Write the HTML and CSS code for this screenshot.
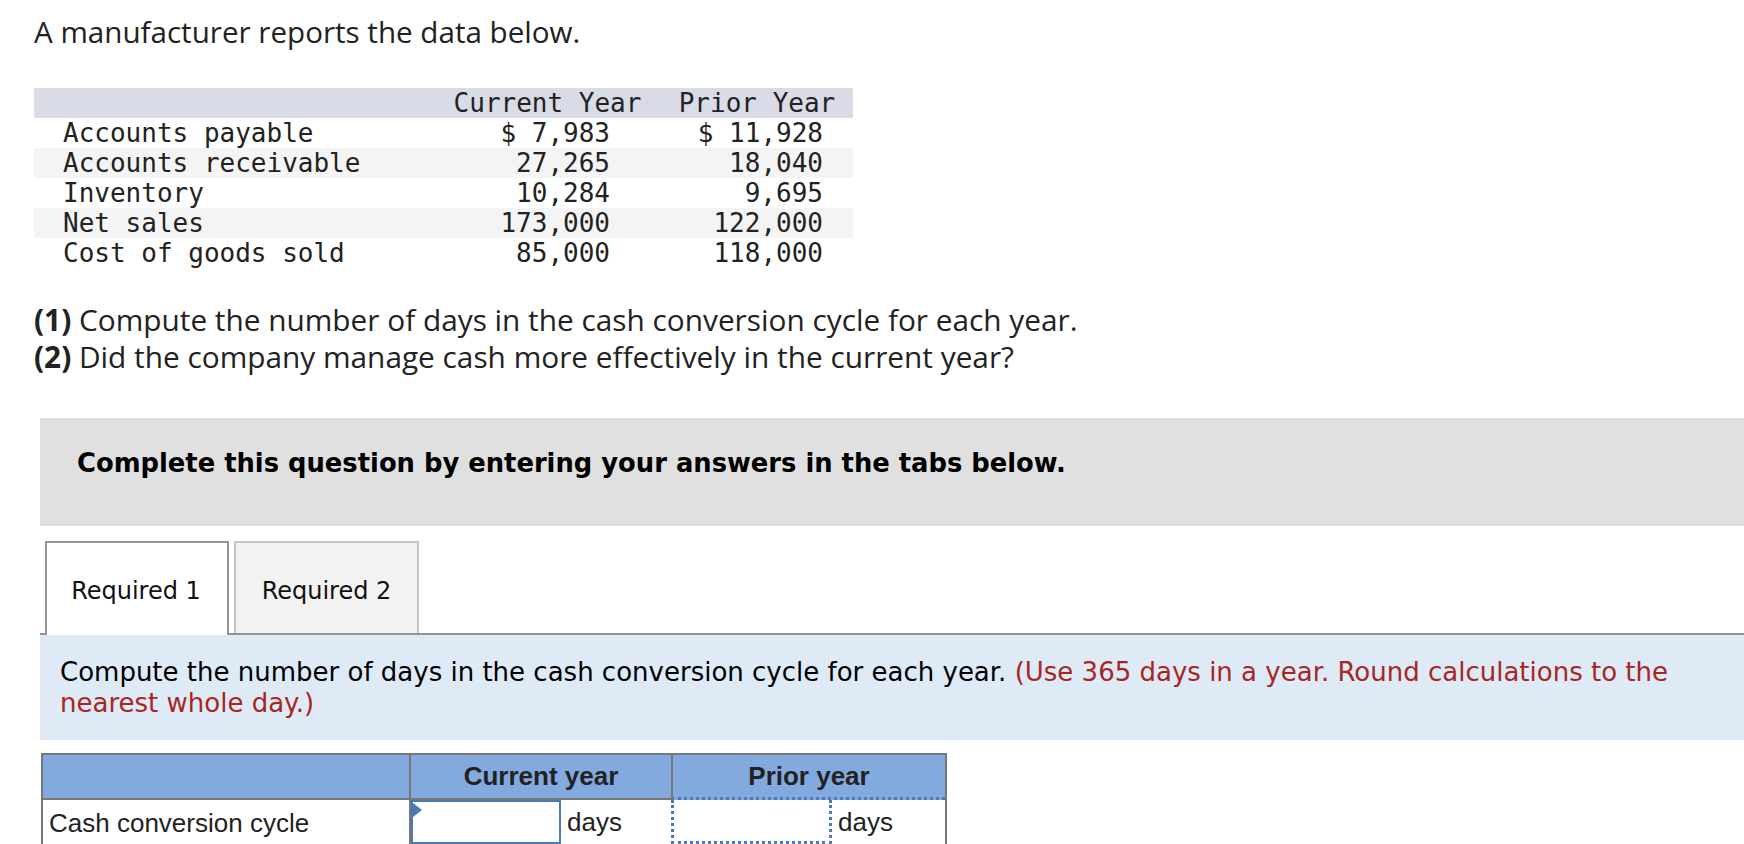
FILE: index.html
```html
<!DOCTYPE html>
<html lang="en">
<head>
<meta charset="utf-8">
<title>Cash conversion cycle</title>
<link rel="stylesheet" href="styles.css">
</head>
<body>
<main class="page">
  <p class="intro">A manufacturer reports the data below.</p>

  <table class="data">
    <colgroup>
      <col class="c-label"><col class="c-cur"><col class="c-pri">
    </colgroup>
    <thead>
      <tr><th></th><th>Current Year</th><th class="pri-h">Prior Year</th></tr>
    </thead>
    <tbody>
      <tr><td class="lbl">Accounts payable</td><td class="cur">$ 7,983</td><td class="pri">$ 11,928</td></tr>
      <tr><td class="lbl">Accounts receivable</td><td class="cur">27,265</td><td class="pri">18,040</td></tr>
      <tr><td class="lbl">Inventory</td><td class="cur">10,284</td><td class="pri">9,695</td></tr>
      <tr><td class="lbl">Net sales</td><td class="cur">173,000</td><td class="pri">122,000</td></tr>
      <tr><td class="lbl">Cost of goods sold</td><td class="cur">85,000</td><td class="pri">118,000</td></tr>
    </tbody>
  </table>

  <div class="questions">
    <p><b>(1)</b> Compute the number of days in the cash conversion cycle for each year.</p>
    <p><b>(2)</b> Did the company manage cash more effectively in the current year?</p>
  </div>

  <div class="instruct">Complete this question by entering your answers in the tabs below.</div>

  <div class="tabs">
    <button class="tab active" type="button">Required 1</button>
    <button class="tab" type="button">Required 2</button>
  </div>

  <div class="panel">
    <p>Compute the number of days in the cash conversion cycle for each year. <span class="note">(Use 365 days in a year. Round calculations to the</span> <span class="note">nearest whole day.)</span></p>
  </div>

  <table class="answer">
    <colgroup>
      <col class="a-label"><col class="a-cur"><col class="a-pri">
    </colgroup>
    <thead>
      <tr><th class="h-blank"></th><th class="h-cur">Current year</th><th class="h-pri">Prior year</th></tr>
    </thead>
    <tbody>
      <tr>
        <td class="a-lbl">Cash conversion cycle</td>
        <td class="a-in cur-cell">
          <div class="entry">
            <span class="field flagged"><input type="text" aria-label="Current year days"></span>
            <span class="unit">days</span>
          </div>
        </td>
        <td class="a-in pri-cell">
          <div class="entry">
            <span class="field dotted"><input type="text" aria-label="Prior year days"></span>
            <span class="unit">days</span>
          </div>
        </td>
      </tr>
    </tbody>
  </table>
</main>
</body>
</html>
```
FILE: styles.css
```css
html, body {
  margin: 0;
  padding: 0;
  background: #ffffff;
}

body {
  color: #222222;
  overflow: hidden;
}

.page {
  display: flex;
  flex-direction: column;
  align-items: flex-start;
}

.intro {
  margin: 0;
  padding: 14px 0 0 34px;
  font-family: "Open Sans", sans-serif;
  font-size: 29.6px;
  line-height: 36px;
  color: #222222;
}

/* ---------- data table ---------- */
.data {
  margin: 38px 0 0 34px;
  border-collapse: collapse;
  table-layout: fixed;
  width: 819px;
  font-family: "DejaVu Sans Mono", monospace;
  font-size: 26px;
  line-height: 30px;
  color: #222222;
}

.c-label { width: 406px; }
.c-cur { width: 215px; }
.c-pri { width: 198px; }

.data th,
.data td {
  padding: 0;
  height: 30px;
  white-space: pre;
}

.data thead tr { background: #d9dce6; }
.data th { font-weight: normal; text-align: center; }
.data .pri-h { padding-left: 6px; }
.data tbody tr:nth-child(even) { background: #f4f4f4; }

.data .lbl { padding-left: 29px; text-align: left; }
.data .cur { text-align: right; padding-right: 45px; }
.data .pri { text-align: right; padding-right: 30px; }

/* ---------- questions ---------- */
.questions {
  margin: 33px 0 0 34px;
  font-family: "Open Sans", sans-serif;
  font-size: 29.8px;
  line-height: 37px;
  color: #222222;
}

.questions p { margin: 0; }
.questions b { font-weight: 700; }

/* ---------- instruction bar ---------- */
.instruct {
  align-self: stretch;
  box-sizing: border-box;
  margin: 43px 0 0 40px;
  height: 108px;
  padding: 30px 0 0 37px;
  background: #e0e0e0;
  font-family: "DejaVu Sans", sans-serif;
  font-weight: bold;
  font-size: 25.8px;
  line-height: 30px;
  color: #000000;
}

/* ---------- tabs ---------- */
.tabs {
  display: flex;
  align-items: flex-end;
  gap: 5px;
  margin: 15px 0 0 45px;
}

.tab {
  box-sizing: border-box;
  width: 185px;
  height: 92px;
  margin: 0;
  padding: 5px 0 0 0;
  border: 2px solid #c6c6c6;
  border-bottom: none;
  background: #f2f2f2;
  font-family: "DejaVu Sans", sans-serif;
  font-size: 24px;
  color: #111111;
  text-align: center;
  cursor: pointer;
}

.tab.active {
  position: relative;
  z-index: 1;
  width: 184px;
  height: 94px;
  margin-bottom: -2px;
  padding-top: 3px;
  padding-right: 2px;
  border-color: #949494;
  background: #ffffff;
}

/* ---------- panel ---------- */
.panel {
  align-self: stretch;
  margin-left: 40px;
  border-top: 2px solid #949494;
  background: #dfeaf7;
  padding: 22px 20px 21px 20px;
  font-family: "DejaVu Sans", sans-serif;
  font-size: 26px;
  line-height: 31px;
  color: #000000;
}

.panel p { margin: 0; }
.note { color: #a8261d; }

/* ---------- answer table ---------- */
.answer {
  margin: 13px 0 0 41px;
  border-collapse: separate;
  border-spacing: 0;
  table-layout: fixed;
  width: 906px;
  border: 2px solid #777777;
  border-bottom: none;
  font-family: "Liberation Sans", Arial, sans-serif;
  font-size: 26px;
  color: #222222;
}

.a-label { width: 366px; }
.a-cur { width: 262px; }
.a-pri { width: 274px; }

.answer th {
  height: 42px;
  padding: 0;
  background: #82aadf;
  font-weight: bold;
  text-align: center;
  border-bottom: 2px solid #777777;
}

.answer .h-cur,
.answer .h-pri { border-left: 2px solid #777777; }

.answer .h-pri { border-bottom: 3px dotted #4a78b8; }

.answer td {
  padding: 0;
  height: 46px;
  vertical-align: top;
}

.answer .a-lbl {
  padding-left: 6px;
  vertical-align: middle;
  padding-bottom: 2px;
}

.answer .cur-cell { border-left: 2px solid #777777; }

.entry {
  display: flex;
  align-items: center;
  height: 44px;
}

.field {
  position: relative;
  display: block;
  box-sizing: border-box;
  height: 44px;
}

.field input {
  display: block;
  box-sizing: border-box;
  width: 100%;
  height: 100%;
  margin: 0;
  padding: 0 6px;
  border: none;
  background: transparent;
  font: inherit;
  outline: none;
}

.field.flagged {
  width: 150px;
  border: 2px solid #4a78b8;
  background: #ffffff;
}

.field.flagged::before {
  content: "";
  position: absolute;
  left: 0;
  top: 1px;
  border-top: 7px solid transparent;
  border-bottom: 7px solid transparent;
  border-left: 9px solid #4a78b8;
}

.field.dotted {
  width: 161px;
  border: 3px dotted #4a78b8;
  border-top: none;
  height: 44px;
}

.unit {
  margin-left: 6px;
  line-height: 30px;
}
```
